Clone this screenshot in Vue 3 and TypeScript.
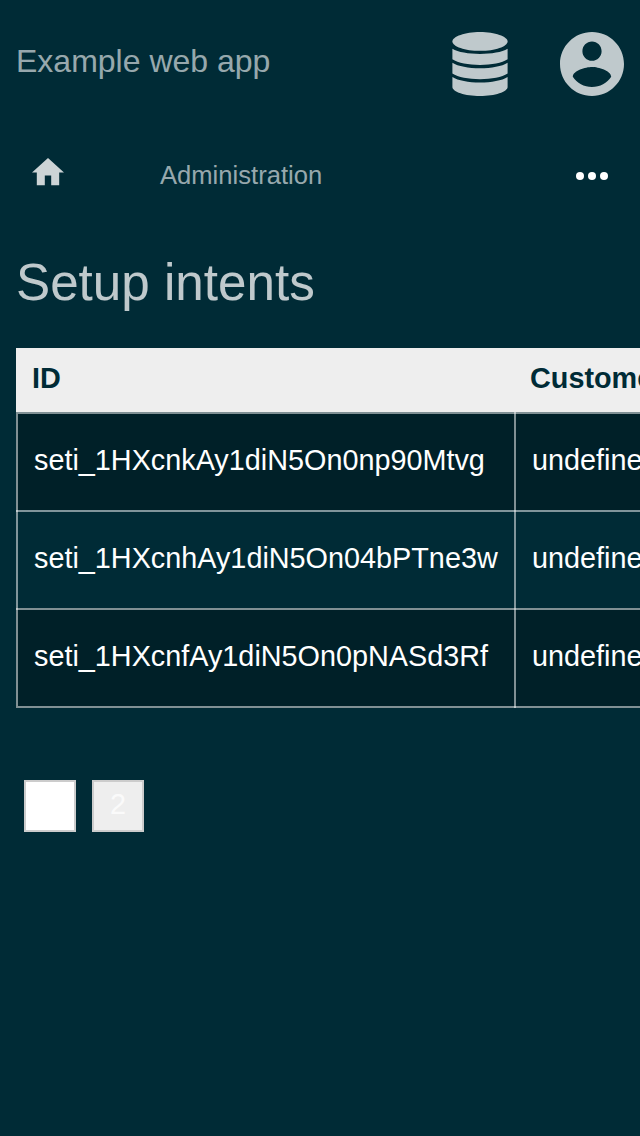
<script setup lang="ts">
interface SetupIntent {
  id: string
  customer: string
}

const intents: SetupIntent[] = [
  { id: 'seti_1HXcnkAy1diN5On0np90Mtvg', customer: 'undefined' },
  { id: 'seti_1HXcnhAy1diN5On04bPTne3w', customer: 'undefined' },
  { id: 'seti_1HXcnfAy1diN5On0pNASd3Rf', customer: 'undefined' },
]

const pages: number[] = [1, 2]
const currentPage = 1
</script>

<template>
  <div class="page">
    <header class="topbar">
      <span class="brand">Example web app</span>
      <div class="tools">
        <svg class="database" viewBox="0 0 56 64">
          <path d="M28 0C43 0 55.6 4.6 55.6 9.4C55.6 14.4 43 18.8 28 18.8S.4 14.4 .4 9.4C.4 4.6 13 0 28 0z" />
          <path d="M.4 16.7C6 20.1 16.5 21.9 28 21.9S50 20.1 55.6 16.7V27.3C50 31 39.5 32.9 28 32.9S6 31 .4 27.3z" />
          <path d="M.4 30.8C6 34.4 16.5 36.3 28 36.3S50 34.4 55.6 30.8V41.6C50 45.3 39.5 47.3 28 47.3S6 45.3 .4 41.6z" />
          <path d="M.4 45C6 48.6 16.5 50.5 28 50.5S50 48.6 55.6 45V55C55.6 59.8 43 64 28 64S.4 59.8 .4 55z" />
        </svg>
        <svg class="account" viewBox="2 2 20 20">
          <path d="M12 2C6.48 2 2 6.48 2 12s4.48 10 10 10 10-4.48 10-10S17.52 2 12 2zm0 3c1.66 0 3 1.34 3 3s-1.34 3-3 3-3-1.34-3-3 1.34-3 3-3zm0 14.2c-2.5 0-4.71-1.28-6-3.22.03-1.99 4-3.08 6-3.08 1.99 0 5.97 1.09 6 3.08-1.29 1.94-3.5 3.22-6 3.22z" />
        </svg>
      </div>
    </header>

    <nav class="navbar">
      <svg class="home" viewBox="2 3 20 17">
        <path d="M10 20v-6h4v6h5v-8h3L12 3 2 12h3v8z" />
      </svg>
      <span class="crumb">Administration</span>
      <svg class="more" viewBox="0 0 32 8">
        <circle cx="4" cy="4" r="4" />
        <circle cx="16" cy="4" r="4" />
        <circle cx="28" cy="4" r="4" />
      </svg>
    </nav>

    <main>
      <h1>Setup intents</h1>
      <table>
        <thead>
          <tr>
            <th class="id">ID</th>
            <th>Customer</th>
          </tr>
        </thead>
        <tbody>
          <tr v-for="intent in intents" :key="intent.id">
            <td>{{ intent.id }}</td>
            <td>{{ intent.customer }}</td>
          </tr>
        </tbody>
      </table>
      <div class="pager">
        <span v-for="page in pages" :key="page" class="pager-item" :class="{ current: page === currentPage }">{{ page }}</span>
      </div>
    </main>
  </div>
</template>

<style>
body {
  margin: 0;
  background: #002b36;
}
</style>

<style scoped>
.page {
  width: 640px;
  height: 1136px;
  overflow: hidden;
  box-sizing: border-box;
  background: #002b36;
  color: #fff;
  font-family: "Liberation Sans", Arial, sans-serif;
}

.topbar {
  display: flex;
  justify-content: space-between;
  height: 128px;
  padding: 32px 16px;
  box-sizing: border-box;
}

.brand {
  font-size: 32px;
  line-height: 58px;
  color: rgba(255, 255, 255, 0.6);
}

.tools {
  display: flex;
  gap: 52px;
  fill: rgba(255, 255, 255, 0.75);
}

.database {
  width: 56px;
  height: 64px;
}

.account {
  width: 64px;
  height: 64px;
}

.navbar {
  display: flex;
  align-items: center;
  height: 96px;
  padding: 0 32px;
}

.home {
  width: 32px;
  height: 27.2px;
  margin-top: -8px;
  fill: rgba(255, 255, 255, 0.8);
}

.crumb {
  flex: 1;
  margin: 0 0 2px 96px;
  font-size: 25.6px;
  line-height: 32px;
  color: rgba(255, 255, 255, 0.6);
}

.more {
  width: 32px;
  height: 8px;
  fill: #fff;
}

main {
  padding: 26px 16px 0;
}

h1 {
  margin: 0 0 32px;
  font-size: 51.2px;
  font-weight: 400;
  line-height: 66px;
  color: rgba(255, 255, 255, 0.75);
}

table {
  width: 820px;
  table-layout: fixed;
  border-spacing: 0;
  font-size: 28.8px;
  line-height: 32px;
  white-space: nowrap;
}

th {
  height: 64px;
  padding: 0 16px 4px;
  box-sizing: border-box;
  background: #eee;
  color: #002b36;
  text-align: left;
}

.id {
  width: 498px;
}

/* Translucent rules are layered so that they brighten where they cross. */
td {
  --rule: linear-gradient(rgba(255, 255, 255, 0.5), rgba(255, 255, 255, 0.5));
  height: 98px;
  padding: 0 0 2px 18px;
  box-sizing: border-box;
  background: var(--rule) 0 0 / 2px 100% no-repeat, var(--rule) 0 0 / 100% 2px no-repeat;
}

tbody tr:nth-child(odd) td {
  background-color: rgba(0, 0, 0, 0.25);
}

tbody tr:first-child td:first-child {
  background-position: 0 2px, 0 0;
}

tbody tr:last-child td {
  height: 100px;
  padding-bottom: 4px;
  background-image: var(--rule), var(--rule), var(--rule);
  background-position: 0 0, 0 0, 0 100%;
  background-size: 2px 100%, 100% 2px, 100% 2px;
  background-repeat: no-repeat;
}

tbody tr:last-child td:first-child {
  background-position: 0 0, 0 0, 2px 100%;
}

.pager {
  display: flex;
  gap: 16px;
  margin: 72px 8px 0;
}

.pager-item {
  width: 52px;
  height: 52px;
  box-sizing: border-box;
  border: 2px solid #ccc;
  background: #eee;
  color: rgba(255, 255, 255, 0.75);
  font-size: 28.8px;
  line-height: 44px;
  text-align: center;
}

.current {
  background: #fff;
  color: #fff;
}
</style>
